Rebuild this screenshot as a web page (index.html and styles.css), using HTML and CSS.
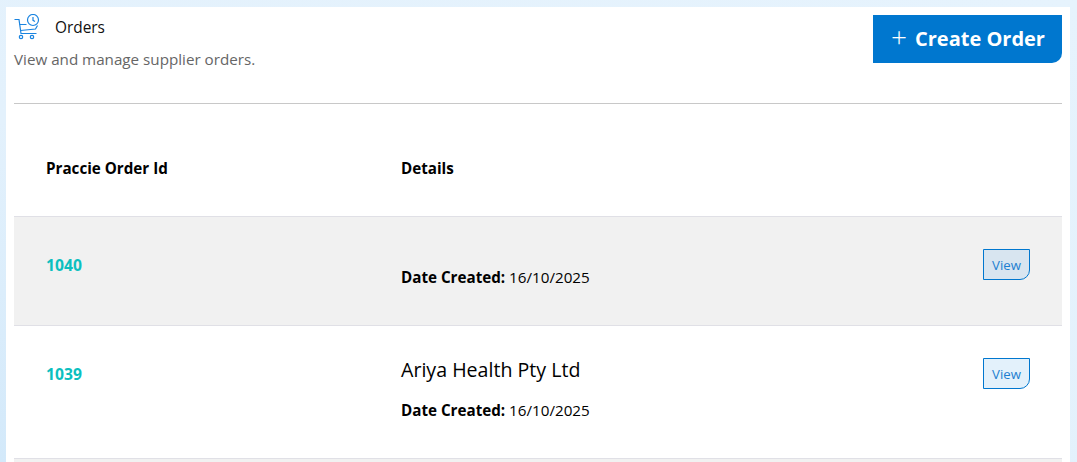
FILE: index.html
```html
<!DOCTYPE html>
<html lang="en">
<head>
<meta charset="utf-8">
<title>Orders</title>
<link rel="stylesheet" href="styles.css">
</head>
<body>
<main class="card">
  <header class="head">
    <div class="head-text">
      <div class="title-row">
        <svg class="cart" width="26" height="26" viewBox="0 0 26 26" fill="none" stroke="#1a84e0" stroke-width="1.200">
          <path d="M0.500 5.500h4.500l2 14h15.500"/>
          <path d="M5.500 10.500h7M6.500 16.500l15-1.500 2-3.500"/>
          <circle cx="7" cy="23" r="1.700"/>
          <circle cx="18" cy="23" r="1.700"/>
          <circle cx="19" cy="6" r="5.500"/>
          <path d="M19 3v3.300l2 1.200"/>
        </svg>
        <h1 class="title">Orders</h1>
      </div>
      <p class="sub">View and manage supplier orders.</p>
    </div>
    <a class="create"><span class="plus">+</span>Create Order</a>
  </header>
  <div class="thead">
    <div class="col-id">Praccie Order Id</div>
    <div class="col-details">Details</div>
  </div>
  <div class="row shaded">
    <div class="col-id order-id">1040</div>
    <div class="col-details">
      <div class="date"><b>Date Created:</b> 16/10/2025</div>
    </div>
    <a class="view">View</a>
  </div>
  <div class="row">
    <div class="col-id order-id">1039</div>
    <div class="col-details">
      <div class="supplier">Ariya Health Pty Ltd</div>
      <div class="date"><b>Date Created:</b> 16/10/2025</div>
    </div>
    <a class="view">View</a>
  </div>
  <div class="row shaded"></div>
</main>
</body>
</html>
```
FILE: styles.css
```css
html, body { height: 100%; }
body {
  margin: 0;
  overflow: hidden;
  background: linear-gradient(200deg, #e6f3fd 0%, #e3f1fc 60%, #d3e9fa 100%);
  font-family: "Open Sans", "Liberation Sans", sans-serif;
  color: #000;
}
.card {
  margin: 7px 7px 0 6px;
  padding: 0 8px;
  height: 455px;
  box-sizing: border-box;
  background: #fff;
  overflow: hidden;
}
.head {
  display: flex;
  justify-content: space-between;
  align-items: flex-start;
  height: 96px;
  border-bottom: 1px solid #c8c8c8;
}
.title-row { display: flex; align-items: center; height: 26px; margin-top: 7px; }
.cart { margin-right: 15px; flex: none; }
.title { margin: 0; font-size: 15.400px; font-weight: 400; color: #111; }
.sub { margin: 9px 0 0; font-size: 15.200px; line-height: 20px; color: #666; }
.create {
  margin-top: 8px;
  width: 189px;
  height: 48px;
  box-sizing: border-box;
  padding: 0 0 2px 18px;
  display: flex;
  align-items: center;
  background: #0077cf;
  color: #fff;
  font-size: 20px;
  font-weight: 700;
  border-bottom-right-radius: 10px;
}
.plus { font-weight: 300; font-size: 28px; line-height: 1; margin-right: 8px; position: relative; top: -2px; }
.thead {
  display: flex;
  align-items: center;
  height: 113px;
  padding: 16px 0 0 32px;
  box-sizing: border-box;
  font-size: 15.200px;
  font-weight: 700;
  border-bottom: 1px solid #e0e0e6;
}
.col-id { width: 355px; flex: none; }
.col-details { flex: 1; }
.row {
  display: flex;
  padding: 30px 32px 38px;
  border-bottom: 1px solid #e0e0e6;
  background: #fff;
}
.shaded { background: #f1f1f1; }
.order-id { padding-top: 8px; font-size: 15.700px; font-weight: 700; color: #0cbfbf; line-height: 20px; }
.supplier { margin-bottom: -4px; font-size: 19.600px; line-height: 28px; }
.date { margin-top: 20px; font-size: 15.200px; line-height: 20px; }
.view {
  margin-top: 2px;
  width: 47px;
  height: 31px;
  box-sizing: border-box;
  border: 1px solid #0077cf;
  border-bottom-right-radius: 10px;
  background: #e3f1fb;
  color: #1d7fd0;
  font-size: 13.200px;
  display: flex;
  align-items: center;
  justify-content: center;
}
.shaded .view { background: #d8e5f0; }
```
